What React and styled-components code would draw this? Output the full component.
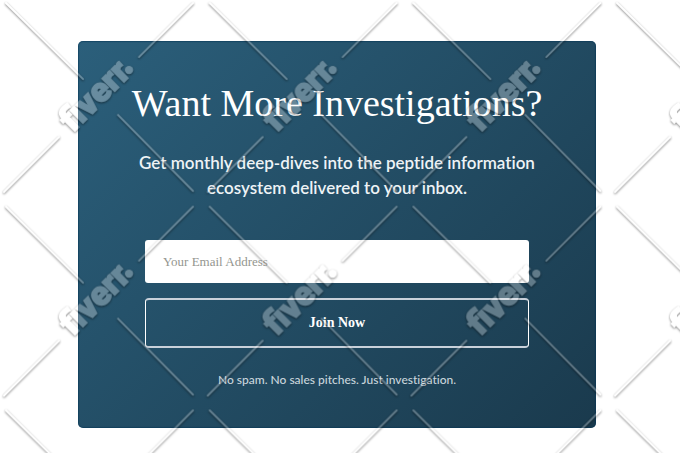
import styled, { createGlobalStyle } from 'styled-components'

const GlobalStyle = createGlobalStyle`
    *{
        box-sizing: border-box;
        margin: 0;
        padding: 0;
    }
    body{
        background-color: #fff;
        overflow-x: hidden;
    }
`
const Page = styled.main`
    min-height: 100vh;
    padding: 41px 84px 25px 78px;
`
const Card = styled.section`
    display: flex;
    flex-direction: column;
    align-items: center;
    max-width: 640px;
    margin: 0 auto;
    padding: 40px 48px;
    border-radius: 5px;
    background: linear-gradient(135deg, #2b5f7b, #1a3a4d);
    box-shadow: inset 0 0 1px 1px #0635558c;
    color: #fff;
    text-align: center;
`
const Title = styled.h2`
    font-family: "Liberation Serif", serif;
    font-size: 38px;
    font-weight: normal;
    line-height: 45px;
    margin-bottom: 24px;
`
const Text = styled.p`
    font-family: Lato, sans-serif;
    font-size: ${({ $small }) => $small ? '12px' : '17px'};
    line-height: ${({ $small }) => $small ? '16px' : '25px'};
    font-weight: ${({ $small }) => $small ? '500' : '600'};
    font-variant-ligatures: none;
    color: ${({ $small }) => $small ? '#c9d5dc' : '#eef3f6'};
`
const Form = styled.form`
    width: 100%;
    max-width: 384px;
    display: flex;
    flex-direction: column;
    gap: 15px;
    margin: 40px 0 24px;
`
const Email = styled.input`
    width: 100%;
    height: 43px;
    padding: 0 18px;
    border: none;
    border-radius: 3px;
    background-color: #fff;
    font-family: "Liberation Serif", serif;
    font-size: 13px;
    color: #1a3a4d;

    &::placeholder{
        color: #94968f;
        opacity: 1;
    }
`
const Button = styled.button`
    height: 50px;
    border-style: solid;
    border-width: 2px 1px;
    border-color: #c9d1da #fff;
    border-radius: 4px;
    background: transparent;
    color: #fff;
    font-family: "Liberation Serif", serif;
    font-size: 14px;
    font-weight: bold;
    cursor: pointer;
`
const Overlay = styled.svg`
    position: fixed;
    inset: 0;
    width: 100%;
    height: 100%;
    pointer-events: none;
`

const Watermark = () => {
    return (
        <Overlay aria-hidden='true'>
            <defs>
                {/* see-through fill, shadow only outside of the shape */}
                <filter id='emboss' x='0' y='0' width='204' height='204' filterUnits='userSpaceOnUse' colorInterpolationFilters='sRGB'>
                    <feGaussianBlur in='SourceAlpha' stdDeviation='0.8' result='blur' />
                    <feOffset in='blur' dx='0.2' dy='0.7' result='moved' />
                    <feComposite in='moved' in2='SourceAlpha' operator='out' result='outer' />
                    <feComponentTransfer in='outer' result='shadow'>
                        <feFuncA type='linear' slope='0.5' />
                    </feComponentTransfer>
                    <feComponentTransfer in='SourceGraphic' result='fill'>
                        <feFuncA type='linear' slope='0.3' />
                    </feComponentTransfer>
                    <feMerge>
                        <feMergeNode in='shadow' />
                        <feMergeNode in='fill' />
                    </feMerge>
                </filter>
                <pattern id='tile' width='203.7' height='203.7' patternUnits='userSpaceOnUse'>
                    <g filter='url(#emboss)' fill='#fff' stroke='#fff'>
                        <g strokeWidth='2' strokeLinecap='round'>
                            <path d='M6 3L83 79' />
                            <path d='M193 3L139 57' />
                            <path d='M118 115L193 191' />
                            <path d='M59 137L4 192' />
                        </g>
                        <text
                            transform='translate(73 133) rotate(-45)'
                            fontFamily='Roboto, "Liberation Sans", sans-serif'
                            fontSize='34'
                            fontWeight='900'
                            strokeWidth='1.5'
                        >
                            fiverr
                        </text>
                        <circle cx='129' cy='70' r='4.2' stroke='none' />
                    </g>
                </pattern>
            </defs>
            <rect width='100%' height='100%' fill='url(#tile)' />
        </Overlay>
    )
}

const App = () => {
    return (
        <>
            <GlobalStyle />
            <Page>
                <Card>
                    <Title>Want More Investigations?</Title>
                    <Text>Get monthly deep-dives into the peptide information ecosystem delivered to your inbox.</Text>
                    <Form onSubmit={(e) => e.preventDefault()}>
                        <Email type='email' placeholder='Your Email Address' aria-label='Your Email Address' />
                        <Button type='submit'>Join Now</Button>
                    </Form>
                    <Text $small>No spam. No sales pitches. Just investigation.</Text>
                </Card>
            </Page>
            <Watermark />
        </>
    )
}

export default App
